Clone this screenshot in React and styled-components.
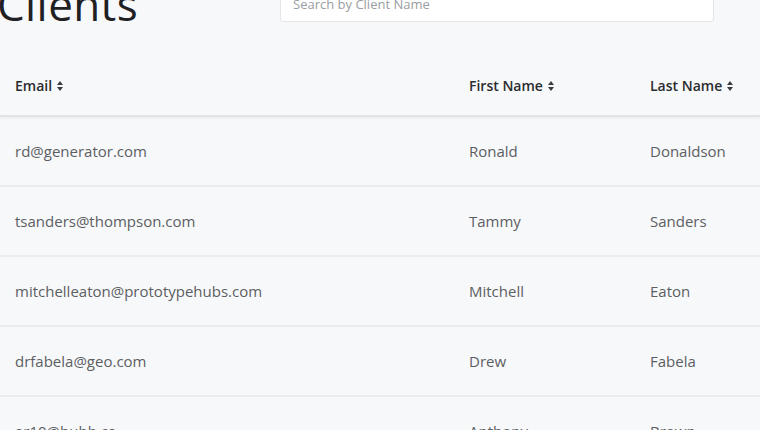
import styled, { createGlobalStyle } from "styled-components";

const GlobalStyle = createGlobalStyle`
  html, body {
    margin: 0;
    background: #f7f8fa;
    overflow: hidden;
  }
  * {
    box-sizing: border-box;
  }
`;

const clients = [
  { email: "rd@generator.com", first: "Ronald", last: "Donaldson" },
  { email: "tsanders@thompson.com", first: "Tammy", last: "Sanders" },
  { email: "mitchelleaton@prototypehubs.com", first: "Mitchell", last: "Eaton" },
  { email: "drfabela@geo.com", first: "Drew", last: "Fabela" },
  { email: "ar10@hubb.ca", first: "Anthony", last: "Brown" },
];

const SortIcon = () => (
  <svg width="6" height="10" viewBox="0 0 6 10">
    <path d="M3 0 L6 4 H0 Z M3 10 L0 6 H6 Z" fill="currentColor" />
  </svg>
);

const App = () => {
  return (
    <Page>
      <GlobalStyle />
      <TopBar>
        <Title>Clients</Title>
        <Search type="search" placeholder="Search by Client Name" />
      </TopBar>

      <Table>
        <HeadRow>
          <HeadCell>
            Email <SortIcon />
          </HeadCell>
          <HeadCell>
            First Name <SortIcon />
          </HeadCell>
          <HeadCell>
            Last Name <SortIcon />
          </HeadCell>
        </HeadRow>
        {clients.map((c) => (
          <Row key={c.email}>
            <Cell>{c.email}</Cell>
            <Cell>{c.first}</Cell>
            <Cell>{c.last}</Cell>
          </Row>
        ))}
      </Table>
    </Page>
  );
};

const Page = styled.div`
  width: 760px;
  height: 430px;
  overflow: hidden;
`;

const TopBar = styled.div`
  display: flex;
  align-items: flex-end;
  margin-top: -24px;
  height: 46px;
`;

const Title = styled.h1`
  margin: 0 0 -4px -3px;
  width: 283px;
  font-family: "Open Sans", sans-serif;
  font-weight: 400;
  font-size: 44px;
  line-height: 1;
  color: #1f2023;
  letter-spacing: 0.4px;
`;

const Search = styled.input`
  width: 434px;
  height: 36px;
  padding: 0 12px;
  border: 1px solid #e4e6ea;
  border-radius: 3px;
  background: #ffffff;
  font-family: "Open Sans", sans-serif;
  font-size: 13px;
  color: #444;
  &::placeholder {
    color: #9a9da3;
  }
`;

const Table = styled.div`
  margin-top: 34px;
  font-family: "Open Sans", sans-serif;
`;

const grid = `
  display: grid;
  grid-template-columns: 454px 181px 1fr;
  align-items: center;
`;

const HeadRow = styled.div`
  ${grid}
  height: 61px;
  border-bottom: 2px solid #e2e3e6;
  box-shadow: 0 2px 2px rgba(0, 0, 0, 0.04);
`;

const HeadCell = styled.div`
  display: flex;
  align-items: center;
  gap: 5px;
  padding-left: 15px;
  font-size: 14px;
  font-weight: 600;
  color: #2b2c2f;
  svg {
    color: #3a3b3e;
  }
`;

const Row = styled.div`
  ${grid}
  height: 70px;
  border-bottom: 2px solid #ebecef;
`;

const Cell = styled.div`
  padding-left: 15px;
  font-size: 15px;
  color: #5c5e62;
`;

export default App;
